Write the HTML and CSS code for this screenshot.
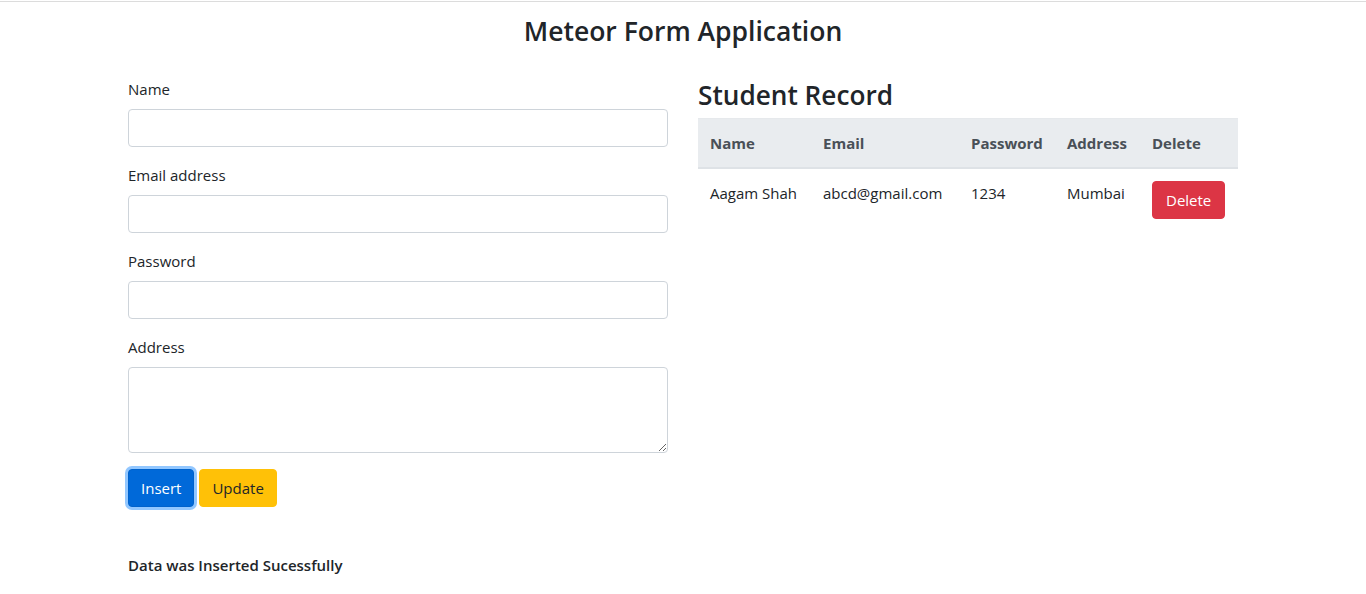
FILE: index.html
```html
<!DOCTYPE html>
<html lang="en">
<head>
<meta charset="utf-8">
<title>Meteor Form Application</title>
<link rel="stylesheet" href="styles.css">
</head>
<body>
<div class="topline"></div>
<h3 class="page-title">Meteor Form Application</h3>
<div class="container">
  <div class="row">
    <div class="col col-form">
      <form class="form">
        <div class="form-group">
          <label class="label" for="name">Name</label>
          <input class="form-control" id="name" type="text">
        </div>
        <div class="form-group">
          <label class="label" for="email">Email address</label>
          <input class="form-control" id="email" type="email">
        </div>
        <div class="form-group">
          <label class="label" for="password">Password</label>
          <input class="form-control" id="password" type="password">
        </div>
        <div class="form-group">
          <label class="label" for="address">Address</label>
          <textarea class="form-control textarea" id="address" rows="3"></textarea>
        </div>
        <div class="buttons">
          <button type="button" class="btn btn-primary focused">Insert</button>
          <button type="button" class="btn btn-warning">Update</button>
        </div>
      </form>
      <div class="message">Data was Inserted Sucessfully</div>
    </div>
    <div class="col col-table">
      <h2 class="section-title">Student Record</h2>
      <table class="table">
        <colgroup>
          <col class="c1"><col class="c2"><col class="c3"><col class="c4"><col class="c5">
        </colgroup>
        <thead>
          <tr>
            <th>Name</th>
            <th>Email</th>
            <th>Password</th>
            <th>Address</th>
            <th>Delete</th>
          </tr>
        </thead>
        <tbody>
          <tr>
            <td>Aagam Shah</td>
            <td>abcd@gmail.com</td>
            <td>1234</td>
            <td>Mumbai</td>
            <td><button type="button" class="btn btn-danger">Delete</button></td>
          </tr>
        </tbody>
      </table>
    </div>
  </div>
</div>
</body>
</html>
```

FILE: styles.css
```css
* { box-sizing: border-box; }

html, body {
  margin: 0;
  padding: 0;
  background: #fff;
}

body {
  font-family: "Open Sans", "Noto Sans", sans-serif;
  font-size: 15px;
  line-height: 24px;
  color: #212529;
}

.topline {
  height: 1px;
  margin-top: 1px;
  background: #dcdcdc;
}

.page-title {
  margin: 12px 0 0;
  text-align: center;
  font-size: 26.5px;
  font-weight: 600;
  line-height: 34px;
  color: #212529;
}

.container {
  width: 1110px;
  margin: 0 auto;
}

.row {
  display: grid;
  grid-template-columns: 540px 540px;
  column-gap: 30px;
  margin-top: 24px;
}

.col-form {
  padding-top: 5px;
}

.form-group {
  margin-bottom: 16px;
}

.label {
  display: block;
  margin-bottom: 8px;
  line-height: 24px;
}

.form-control {
  display: block;
  width: 100%;
  height: 38px;
  padding: 6px 12px;
  font: inherit;
  color: #495057;
  background: #fff;
  border: 1px solid #ced4da;
  border-radius: 4px;
}

.textarea {
  height: 86px;
  resize: vertical;
}

.buttons {
  display: flex;
  gap: 5px;
}

.btn {
  display: inline-block;
  height: 38px;
  padding: 6px 12px;
  font: inherit;
  line-height: 24px;
  border: 1px solid transparent;
  border-radius: 4px;
  cursor: pointer;
}

.btn-primary {
  color: #fff;
  background: #0069d9;
  border-color: #0062cc;
}

.btn-primary.focused {
  box-shadow: 0 0 0 3px rgba(38, 143, 255, 0.5);
}

.btn-warning {
  color: #212529;
  background: #ffc107;
  border-color: #ffc107;
}

.btn-danger {
  color: #fff;
  background: #dc3545;
  border-color: #dc3545;
  padding: 6px 13px;
}

.message {
  margin-top: 46px;
  font-weight: 600;
}

.section-title {
  margin: 0 0 8px;
  font-size: 26.2px;
  font-weight: 600;
  line-height: 38px;
  padding-top: 4px;
  height: 38px;
}

.table {
  width: 100%;
  border-collapse: collapse;
  table-layout: fixed;
}

.c1 { width: 113px; }
.c2 { width: 148px; }
.c3 { width: 96px; }
.c4 { width: 85px; }
.c5 { width: 98px; }

.table th,
.table td {
  padding: 12px;
  text-align: left;
  vertical-align: top;
  white-space: nowrap;
}

.table thead th {
  background: #e9ecef;
  color: #495057;
  font-weight: 700;
  border-top: 1px solid #e6e9ec;
  border-bottom: 2px solid #dee2e6;
}
```
